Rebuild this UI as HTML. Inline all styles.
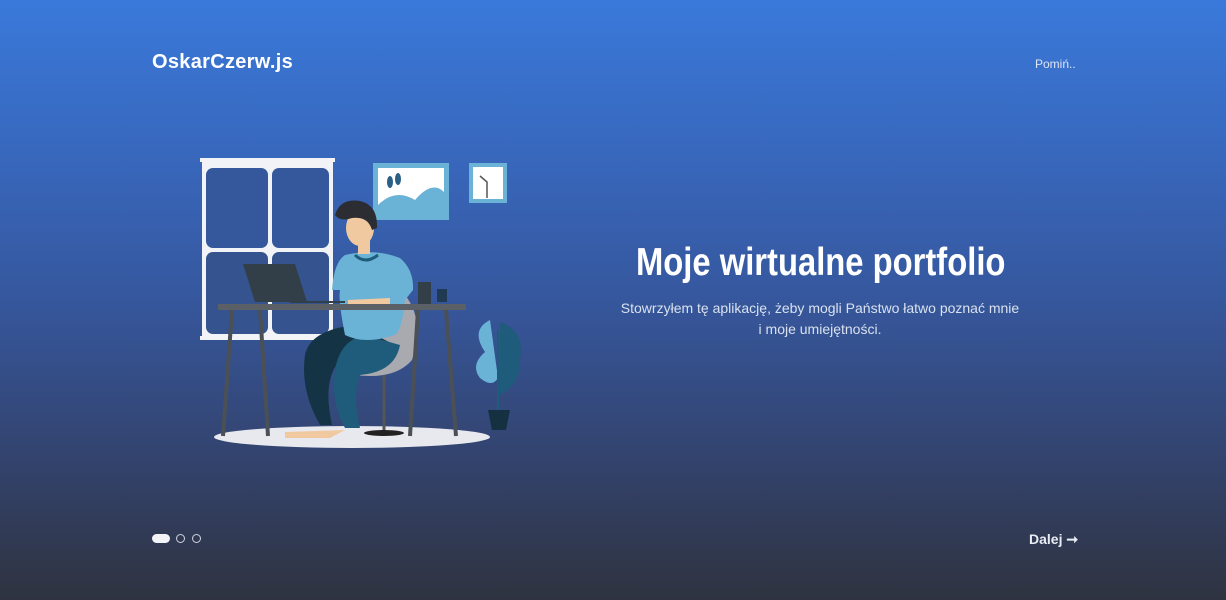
<!DOCTYPE html>
<html><head><meta charset="utf-8"><style>
html,body{margin:0;padding:0}
body{width:1226px;height:600px;overflow:hidden;position:relative;background:linear-gradient(to bottom,#3a79da 0%,#3868be 25%,#36579d 50%,#334470 75%,#2f3340 100%);font-family:"Liberation Sans",sans-serif;color:#fff}
.logo{position:absolute;left:152px;top:51px;font-size:20px;font-weight:bold;letter-spacing:0.3px}
.skip{position:absolute;left:1035px;top:57px;font-size:12px;color:#dde6f5}
.title{position:absolute;left:636px;top:241px;font-size:39px;font-weight:bold;white-space:nowrap;transform-origin:0 0;transform:scaleX(0.84);font-family:"Liberation Sans Narrow","Liberation Sans",sans-serif}
.sub{position:absolute;left:560px;width:520px;top:298px;text-align:center;font-size:14px;line-height:21px;color:#d9e1ee}
.next{position:absolute;left:1029px;top:531px;font-size:14px;font-weight:bold;color:#e8ecf2}
.dots{position:absolute;left:152px;top:534px}
.d1{position:absolute;left:0;top:0;width:18px;height:9px;border-radius:5px;background:#f2f4f8}
.d2,.d3{position:absolute;top:0;width:7px;height:7px;border:1.5px solid #cfd4dc;border-radius:50%}
.d2{left:24px}.d3{left:40px}
svg{position:absolute;left:0;top:0}
</style></head><body>
<div class="logo">OskarCzerw.js</div>
<div class="skip">Pomiń..</div>
<svg width="1226" height="600">
<!-- window -->
<rect x="200" y="158" width="135" height="4" fill="#f1f3f6"/>
<rect x="200" y="336" width="135" height="4" fill="#f1f3f6"/>
<rect x="202" y="160" width="131" height="178" fill="#f1f3f6"/>
<rect x="206" y="168" width="62" height="80" rx="7" fill="#35589c"/>
<rect x="272" y="168" width="57" height="80" rx="7" fill="#35589c"/>
<rect x="206" y="252" width="62" height="82" rx="7" fill="#34538f"/>
<rect x="272" y="252" width="57" height="82" rx="7" fill="#34538f"/>
<!-- picture -->
<rect x="373" y="163" width="76" height="57" fill="#6ab3d6"/>
<rect x="378" y="168" width="66" height="47" fill="#fff"/>
<path d="M378 215 L378 205 Q395 188 415 200 Q432 180 444 192 L444 215Z" fill="#6ab3d6"/>
<ellipse cx="390" cy="182" rx="3" ry="6" fill="#2a5f86"/><ellipse cx="398" cy="179" rx="3" ry="6" fill="#2a5f86"/>
<rect x="469" y="163" width="38" height="40" fill="#6ab3d6"/>
<rect x="473" y="167" width="30" height="32" fill="#fff"/>
<path d="M480 176 L487 182 L487 198" stroke="#555" stroke-width="1.5" fill="none"/>
<!-- floor -->
<ellipse cx="352" cy="437" rx="138" ry="11" fill="#e8e9ef"/>
<!-- chair -->
<path d="M405 295 Q425 320 412 360 Q395 380 355 375 Q330 370 340 360Z" fill="#a8aab0"/>
<line x1="384" y1="375" x2="384" y2="432" stroke="#555" stroke-width="3"/>
<ellipse cx="384" cy="433" rx="20" ry="3" fill="#222"/>
<!-- plant -->
<path d="M490 320 Q470 330 485 352 Q470 365 480 378 Q492 388 498 378 Z" fill="#6ab3d6"/>
<path d="M500 322 Q525 330 520 360 Q520 385 500 395 Z" fill="#1f5b7a"/>
<line x1="498" y1="330" x2="498" y2="410" stroke="#1f5b7a" stroke-width="2"/>
<path d="M488 410 L510 410 L506 430 L492 430Z" fill="#143041"/>
<!-- person legs -->
<path d="M355 325 Q310 330 305 355 Q300 390 320 425 L332 425 Q322 380 340 360 Q380 355 395 345Z" fill="#143446"/>
<path d="M365 335 Q340 340 335 370 Q330 400 345 428 L360 428 Q352 395 360 375 Q395 372 400 345Z" fill="#1f5b7a"/>
<!-- torso -->
<path d="M345 255 Q375 248 400 258 Q414 270 413 290 L405 300 Q402 330 395 335 Q365 345 345 335 Q338 300 340 290 L332 290 Q334 262 345 255Z" fill="#6ab3d6"/>
<path d="M355 255 Q365 265 378 255" stroke="#1f5b7a" stroke-width="3" fill="none"/>
<rect x="358" y="238" width="12" height="16" fill="#f0c9a0"/>
<ellipse cx="360" cy="228" rx="14" ry="18" fill="#f0c9a0"/>
<path d="M335 215 Q340 198 360 201 Q378 205 377 228 L372 230 Q368 216 352 218 Q340 222 335 215Z" fill="#2b2d33"/>
<path d="M348 300 L390 298 L390 304 L348 304Z" fill="#f0c9a0"/>
<path d="M285 432 L345 430 L330 438 L285 438Z" fill="#f0c9a0"/>
<!-- laptop -->
<path d="M243 264 L295 264 L307 302 L255 302Z" fill="#333f48"/>
<line x1="290" y1="302" x2="345" y2="302" stroke="#333f48" stroke-width="2"/>
<!-- cups -->
<rect x="418" y="282" width="13" height="22" fill="#333f48"/>
<rect x="437" y="289" width="10" height="13" fill="#1f3a52"/>
<!-- desk -->
<rect x="218" y="304" width="248" height="6" fill="#5b6066"/>
<line x1="232" y1="310" x2="223" y2="436" stroke="#4a5056" stroke-width="4"/>
<line x1="260" y1="310" x2="268" y2="436" stroke="#4a5056" stroke-width="4"/>
<line x1="418" y1="310" x2="410" y2="436" stroke="#4a5056" stroke-width="4"/>
<line x1="446" y1="310" x2="456" y2="436" stroke="#4a5056" stroke-width="4"/>
</svg>
<div class="title">Moje wirtualne portfolio</div>
<div class="sub">Stowrzyłem tę aplikację, żeby mogli Państwo łatwo poznać mnie<br>i moje umiejętności.</div>
<div class="dots"><div class="d1"></div><div class="d2"></div><div class="d3"></div></div>
<div class="next">Dalej ➞</div>
</body></html>
